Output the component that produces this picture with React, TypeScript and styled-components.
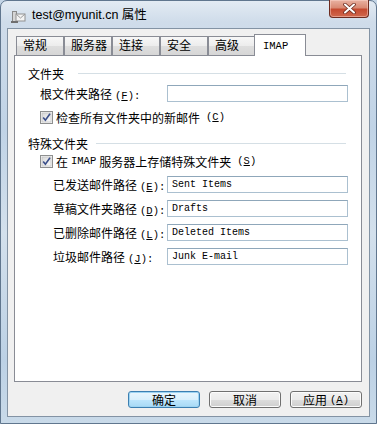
import styled, { createGlobalStyle } from "styled-components"

const GlobalStyle = createGlobalStyle`
  html, body {
    margin: 0;
    padding: 0;
  }
  body {
    width: 377px;
    height: 424px;
    overflow: hidden;
    background: #c4d5e6;
    font-family: "Noto Sans CJK SC", "Liberation Sans", sans-serif;
  }
`

const Window = styled.div`
  box-sizing: border-box;
  width: 377px;
  height: 424px;
  display: flex;
  flex-direction: column;
  padding: 0 6px 6px 6px;
  border: 1px solid #60768e;
  border-radius: 7px 7px 0 0;
  background: linear-gradient(180deg, #e3ebf3 0%, #cfdcea 5%, #c0d3e6 30%, #d3e0ec 55%, #bcd1e5 85%, #c9dae9 100%);
`

const TitleBar = styled.div`
  display: flex;
  align-items: flex-start;
  height: 27px;
`

const TitleIcon = styled.svg`
  margin: 7px 0 0 3px;
  flex: none;
`

const Title = styled.div`
  margin: 5px 0 0 6px;
  font-family: "Liberation Sans", "Noto Sans CJK SC", sans-serif;
  font-size: 12.5px;
  line-height: 18px;
  color: #000;
  flex: 1;
`

const CloseButton = styled.div`
  box-sizing: border-box;
  width: 40px;
  height: 18px;
  margin: -1px 1px 0 0;
  display: flex;
  align-items: center;
  justify-content: center;
  border: 1px solid #6d2b1f;
  border-top: none;
  border-radius: 0 0 4px 4px;
  background: linear-gradient(180deg, #e9b2a2 0%, #d98a74 45%, #c54a30 55%, #d0684d 100%);
  box-shadow: inset 0 0 0 1px rgba(255, 220, 210, 0.45);
`

const Client = styled.div`
  flex: 1;
  display: flex;
  flex-direction: column;
  background: #f0f0f0;
  border: 1px solid #8393a4;
  padding: 5px 7px 0 6px;
`

const TabStrip = styled.div`
  display: flex;
  align-items: flex-end;
  height: 21px;
  padding-left: 2px;
`

const Tab = styled.div<{ $active?: boolean }>`
  box-sizing: border-box;
  width: ${p => (p.$active ? 52 : 48)}px;
  height: ${p => (p.$active ? 22 : 19)}px;
  margin: 0 0 ${p => (p.$active ? -1 : 0)}px ${p => (p.$active ? -2 : 0)}px;
  position: relative;
  z-index: ${p => (p.$active ? 1 : 0)};
  border: 1px solid #898c95;
  border-bottom: none;
  background: ${p => (p.$active ? "#fff" : "linear-gradient(180deg, #f7f7f7 0%, #ececec 50%, #dedede 51%, #d6d6d6 100%)")};
  padding-left: ${p => (p.$active ? 8 : 6)}px;
  font-size: 12px;
  line-height: ${p => (p.$active ? 17 : 16)}px;
  color: #000;
  white-space: nowrap;
`

const MonoText = styled.span`
  font-family: "Liberation Mono", monospace;
  font-size: 10.5px;
`

const Panel = styled.div`
  box-sizing: border-box;
  height: 327px;
  background: #fff;
  border: 1px solid #898c95;
  padding: 9px 13px 0 13px;
  display: flex;
  flex-direction: column;
`

const Heading = styled.div<{ $mt: number; $gap: number }>`
  display: flex;
  align-items: center;
  height: 16px;
  margin-top: ${p => p.$mt}px;
  font-size: 12px;
  color: #000;
  &::after {
    content: "";
    flex: 1;
    height: 1px;
    margin: 1px 2px 0 ${p => p.$gap}px;
    background: #d5dfe5;
  }
`

const FieldRow = styled.div<{ $mt: number; $indent: number }>`
  display: flex;
  align-items: center;
  height: 17px;
  margin-top: ${p => p.$mt}px;
  margin-left: ${p => p.$indent}px;
`

const Label = styled.div<{ $width: number }>`
  width: ${p => p.$width}px;
  flex: none;
  font-size: 12px;
  color: #000;
  white-space: nowrap;
`

const Key = styled.span`
  font-family: "Liberation Mono", monospace;
  font-size: 10.5px;
  margin-left: 3px;
  u {
    text-underline-offset: 1px;
  }
`

const TextBox = styled.div`
  box-sizing: border-box;
  flex: 1;
  height: 17px;
  border: 1px solid #abc0d0;
  border-top-color: #8fa7ba;
  padding-left: 4px;
  font-family: "Liberation Mono", monospace;
  font-size: 10px;
  line-height: 15px;
  color: #000;
  white-space: nowrap;
`

const CheckRow = styled.div<{ $mt: number }>`
  display: flex;
  align-items: center;
  height: 16px;
  margin-top: ${p => p.$mt}px;
  margin-left: 12px;
  font-size: 12px;
  color: #000;
  gap: 3px;
  white-space: nowrap;
`

const ButtonRow = styled.div`
  display: flex;
  justify-content: flex-end;
  gap: 9px;
  margin-top: 9px;
`

const Button = styled.div<{ $primary?: boolean }>`
  box-sizing: border-box;
  width: 72px;
  height: 17px;
  border-radius: 3px;
  border: 1px solid ${p => (p.$primary ? "#3c7fb1" : "#707070")};
  background: ${p =>
    p.$primary
      ? "linear-gradient(180deg, #eaf6fd 0%, #d9f0fc 50%, #bee6fd 51%, #a7d9f5 100%)"
      : "linear-gradient(180deg, #f2f2f2 0%, #ebebeb 50%, #dddddd 51%, #cfcfcf 100%)"};
  box-shadow: inset 0 0 0 1px ${p => (p.$primary ? "#9ed4f2" : "#fcfcfc")};
  display: flex;
  align-items: center;
  justify-content: center;
  font-size: 12px;
  color: #000;
  white-space: nowrap;
`

const Check = () => (
  <svg width="13" height="13" viewBox="0 0 13 13">
    <defs>
      <linearGradient id="cb" x1="0" y1="0" x2="1" y2="1">
        <stop offset="0" stopColor="#d8d8d8" />
        <stop offset="1" stopColor="#fbfbfb" />
      </linearGradient>
    </defs>
    <rect x="0.5" y="0.5" width="12" height="12" fill="#f4f4f4" stroke="#8e8f8f" />
    <rect x="2" y="2" width="9" height="9" fill="url(#cb)" stroke="#b9b9b9" strokeWidth="0.6" />
    <path d="M3.2 6.4 L5.4 9.2 L10 2.8" fill="none" stroke="#3b4f8a" strokeWidth="1.6" />
  </svg>
)

const tabs = ["常规", "服务器", "连接", "安全", "高级"]

const fields = [
  { label: "已发送邮件路径", key: "E", value: "Sent Items" },
  { label: "草稿文件夹路径", key: "D", value: "Drafts" },
  { label: "已删除邮件路径", key: "L", value: "Deleted Items" },
  { label: "垃圾邮件路径", key: "J", value: "Junk E-mail" },
]

export default function App() {
  return (
    <>
      <GlobalStyle />
      <Window>
        <TitleBar>
          <TitleIcon width="16" height="16" viewBox="0 0 16 16">
            <rect x="2" y="3" width="5" height="12" fill="#8a8a8a" />
            <rect x="3" y="4" width="3" height="10" fill="#d6d6d6" />
            <rect x="6" y="6" width="9" height="7" fill="#f4f4f4" stroke="#909090" />
            <path d="M6 6 L10.5 10 L15 6" fill="none" stroke="#9a9a9a" />
            <rect x="1" y="13" width="7" height="2" fill="#6f6f6f" />
          </TitleIcon>
          <Title>test@myunit.cn 属性</Title>
          <CloseButton>
            <svg width="13" height="11" viewBox="0 0 13 11">
              <path d="M2 1.5 L11 9.5 M11 1.5 L2 9.5" stroke="#6b2a1e" strokeWidth="3.6" strokeLinecap="round" />
              <path d="M2 1.5 L11 9.5 M11 1.5 L2 9.5" stroke="#fff" strokeWidth="2" strokeLinecap="round" />
            </svg>
          </CloseButton>
        </TitleBar>
        <Client>
          <TabStrip>
            {tabs.map(t => (
              <Tab key={t}>{t}</Tab>
            ))}
            <Tab $active>
              <MonoText>IMAP</MonoText>
            </Tab>
          </TabStrip>
          <Panel>
            <Heading $mt={0} $gap={14}>文件夹</Heading>
            <FieldRow $mt={4} $indent={12}>
              <Label $width={127}>
                根文件夹路径<Key>(<u>F</u>):</Key>
              </Label>
              <TextBox />
            </FieldRow>
            <CheckRow $mt={7}>
              <Check />
              检查所有文件夹中的新邮件<Key>(<u>C</u>)</Key>
            </CheckRow>
            <Heading $mt={10} $gap={8}>特殊文件夹</Heading>
            <CheckRow $mt={2}>
              <Check />
              在 <MonoText>IMAP</MonoText> 服务器上存储特殊文件夹<Key>(<u>S</u>)</Key>
            </CheckRow>
            {fields.map((f, i) => (
              <FieldRow key={f.key} $mt={i === 0 ? 7 : 7} $indent={25}>
                <Label $width={114}>
                  {f.label}
                  <Key>
                    (<u>{f.key}</u>):
                  </Key>
                </Label>
                <TextBox>{f.value}</TextBox>
              </FieldRow>
            ))}
          </Panel>
          <ButtonRow>
            <Button $primary>确定</Button>
            <Button>取消</Button>
            <Button>
              应用<Key>(<u>A</u>)</Key>
            </Button>
          </ButtonRow>
        </Client>
      </Window>
    </>
  )
}
